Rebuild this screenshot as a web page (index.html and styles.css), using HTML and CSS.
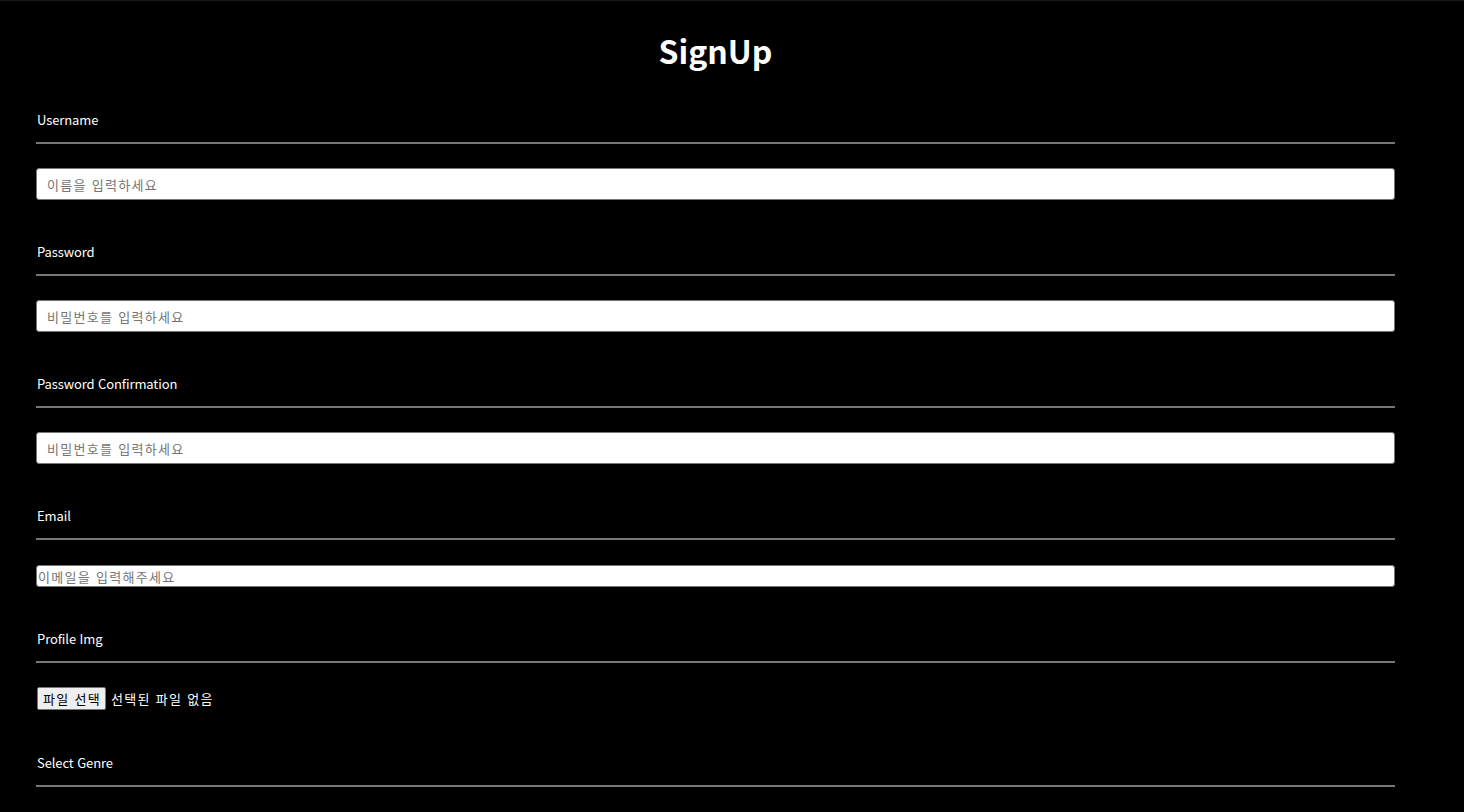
FILE: index.html
```html
<!DOCTYPE html>
<html lang="ko">
<head>
<meta charset="utf-8">
<title>SignUp</title>
<link rel="stylesheet" href="styles.css">
</head>
<body>
<div class="page">
  <h1 class="title">SignUp</h1>
  <form class="form">
    <div class="field">
      <label class="label">Username</label>
      <hr class="rule">
      <input class="input" type="text" placeholder="이름을 입력하세요">
    </div>
    <div class="field">
      <label class="label">Password</label>
      <hr class="rule">
      <input class="input" type="password" placeholder="비밀번호를 입력하세요">
    </div>
    <div class="field">
      <label class="label">Password Confirmation</label>
      <hr class="rule">
      <input class="input" type="password" placeholder="비밀번호를 입력하세요">
    </div>
    <div class="field">
      <label class="label">Email</label>
      <hr class="rule">
      <input class="input input-plain" type="email" placeholder="이메일을 입력해주세요">
    </div>
    <div class="field">
      <label class="label">Profile Img</label>
      <hr class="rule">
      <div class="file">
        <span class="file-btn">파일 선택</span>
        <span class="file-name">선택된 파일 없음</span>
      </div>
    </div>
    <div class="field field-last">
      <label class="label">Select Genre</label>
      <hr class="rule">
    </div>
  </form>
</div>
</body>
</html>
```

FILE: styles.css
```css
html, body {
  margin: 0;
  padding: 0;
  background: #000;
  color: #fff;
  font-family: "Noto Sans CJK KR", "Noto Sans", sans-serif;
  overflow: hidden;
}
body {
  border-top: 1px solid #1a1a1a;
  height: 811px;
}
.page {
  padding: 29px 69px 0 36px;
}
.title {
  margin: 0 0 42px;
  text-align: center;
  font-size: 32px;
  line-height: 40px;
  font-weight: 700;
}
.form {
  display: flex;
  flex-direction: column;
}
.field {
  display: flex;
  flex-direction: column;
  margin-bottom: 44px;
}
.field-last {
  margin-bottom: 0;
}
.label {
  display: block;
  font-size: 13px;
  line-height: 16px;
  padding-left: 1px;
  margin-bottom: 14px;
  letter-spacing: -0.1px;
}
.rule {
  margin: 0 0 24px;
  border: 0;
  height: 2px;
  background: #777;
}
.input {
  box-sizing: border-box;
  height: 32px;
  margin: 0;
  padding: 0 10px;
  border: 1px solid #767676;
  border-radius: 3px;
  background: #fff;
  font-family: inherit;
  font-size: 13px;
  color: #000;
  outline: none;
  letter-spacing: 1.3px;
}
.input::placeholder {
  color: #757575;
}
.input-plain {
  height: 22px;
  padding: 0 1px;
  margin-top: 1px;
}
.file {
  display: flex;
  align-items: center;
  gap: 5px;
  font-size: 13px;
  margin-bottom: 1px;
  letter-spacing: 1.3px;
}
.file-btn {
  box-sizing: border-box;
  height: 23px;
  line-height: 21px;
  padding: 0 4px 0 5px;
  margin-left: 1px;
  background: #efefef;
  color: #000;
  border: 1px solid #767676;
  border-radius: 2px;
}
.file-name {
  color: #fff;
}
```
